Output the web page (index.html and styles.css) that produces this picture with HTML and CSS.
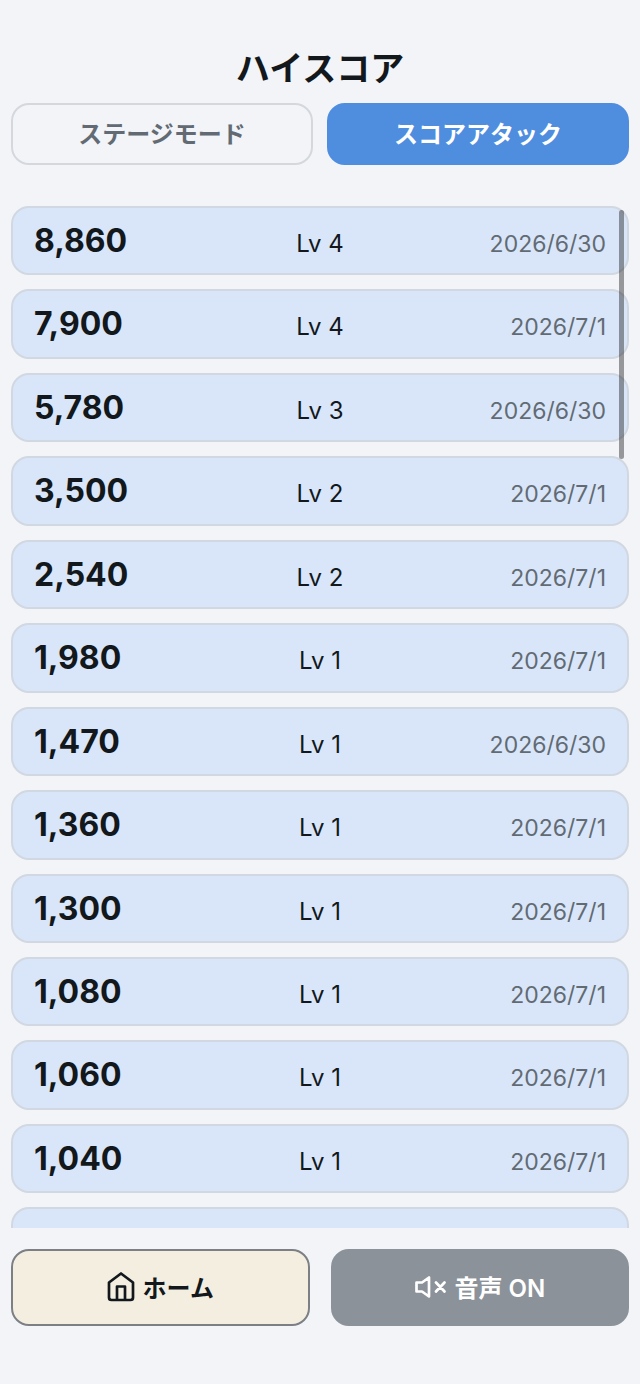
FILE: index.html
```html
<!DOCTYPE html>
<html lang="ja">
<head>
    <meta charset="UTF-8">
    <meta name="viewport" content="width=device-width, initial-scale=1.0">
    <title>ハイスコア</title>
    <link rel="stylesheet" href="styles.css">
</head>
<body>
    <h1>ハイスコア</h1>
    <div class="tabs">
        <button type="button" class="tab">ステージモード</button>
        <button type="button" class="tab active">スコアアタック</button>
    </div>

    <main class="scores">
        <ol class="score-list">
            <li><span class="score">8,860</span><span class="level">Lv 4</span><span class="date">2026/6/30</span></li>
            <li><span class="score">7,900</span><span class="level">Lv 4</span><span class="date">2026/7/1</span></li>
            <li><span class="score">5,780</span><span class="level">Lv 3</span><span class="date">2026/6/30</span></li>
            <li><span class="score">3,500</span><span class="level">Lv 2</span><span class="date">2026/7/1</span></li>
            <li><span class="score">2,540</span><span class="level">Lv 2</span><span class="date">2026/7/1</span></li>
            <li><span class="score">1,980</span><span class="level">Lv 1</span><span class="date">2026/7/1</span></li>
            <li><span class="score">1,470</span><span class="level">Lv 1</span><span class="date">2026/6/30</span></li>
            <li><span class="score">1,360</span><span class="level">Lv 1</span><span class="date">2026/7/1</span></li>
            <li><span class="score">1,300</span><span class="level">Lv 1</span><span class="date">2026/7/1</span></li>
            <li><span class="score">1,080</span><span class="level">Lv 1</span><span class="date">2026/7/1</span></li>
            <li><span class="score">1,060</span><span class="level">Lv 1</span><span class="date">2026/7/1</span></li>
            <li><span class="score">1,040</span><span class="level">Lv 1</span><span class="date">2026/7/1</span></li>
            <li></li>
        </ol>
        <div class="scroll-thumb"></div>
    </main>

    <footer class="actions">
        <button type="button" class="home">
            <svg width="28" height="30" viewBox="0 0 28 30" aria-hidden="true">
                <path d="M2 10.5 L14 1.5 L26 10.5 V25.5 Q26 28 23.5 28 H4.5 Q2 28 2 25.5 Z M10 28 V14.5 H18 V28"/>
            </svg>
            ホーム
        </button>
        <button type="button" class="sound">
            <svg width="32" height="24" viewBox="0 0 32 24" aria-hidden="true">
                <path d="M2.5 7.5 H8 L15 2.5 V21.5 L8 16.5 H2.5 Z M22 7.5 L30.5 16.5 M30.5 7.5 L22 16.5"/>
            </svg>
            音声 ON
        </button>
    </footer>
</body>
</html>
```
FILE: styles.css
```css
* {
    box-sizing: border-box;
}
body {
    margin: 0;
    padding: 48px 11px 58px;
    height: 100vh;
    display: flex;
    flex-direction: column;
    background: #f2f4f8;
    color: #12181c;
    font-family: Inter, "Noto Sans CJK JP", sans-serif;
    font-size: 24px;
}
h1 {
    margin: 0 0 13px;
    font-size: 34px;
    line-height: 42px;
    font-weight: 700;
    text-align: center;
}
button {
    font: inherit;
    color: inherit;
    border-radius: 18px;
    cursor: pointer;
}
.tabs {
    display: flex;
    gap: 14px;
    margin-bottom: 41px;
}
.tab {
    flex: 1;
    height: 62px;
    padding: 0 0 3px;
    border: 2px solid #d4d8dd;
    background: transparent;
    color: #626b73;
    font-weight: 600;
}
.tab.active {
    border-color: #4f8ddf;
    background: #4f8ddf;
    color: #fff;
}
.scores {
    position: relative;
    flex: 1;
    min-height: 0;
}
.score-list {
    height: 100%;
    margin: 0;
    padding: 0;
    list-style: none;
    display: flex;
    flex-direction: column;
    gap: 14px;
    overflow-y: auto;
    scrollbar-width: none;
}
.score-list li {
    flex-shrink: 0;
    min-height: 69px;
    display: grid;
    grid-template-columns: 1fr auto 1fr;
    align-items: baseline;
    padding: 14px 21px;
    border: 2px solid #d1d8e1;
    border-radius: 18px;
    background: #d9e6f9;
    line-height: 1.17;
}
.score {
    font-size: 32px;
    font-weight: 700;
}
.date {
    font-size: 23px;
    color: #626b73;
    text-align: right;
}
/* overlay scroll indicator */
.scroll-thumb {
    position: absolute;
    top: 4px;
    right: 5px;
    width: 5px;
    height: 249px;
    border-radius: 3px;
    background: rgba(0, 0, 0, 0.38);
    pointer-events: none;
}
.actions {
    display: flex;
    gap: 21px;
    margin-top: 21px;
}
.actions button {
    flex: 1;
    height: 77px;
    padding: 0 0 2px;
    display: flex;
    justify-content: center;
    align-items: center;
    gap: 8px;
    border: 2px solid #7c8085;
    font-weight: 600;
}
.actions .home {
    background: #f4eee1;
}
.actions .sound {
    border-color: #8b9299;
    background: #8b9299;
    color: #fff;
}
.actions svg {
    fill: none;
    stroke: currentColor;
    stroke-width: 2.7;
    stroke-linejoin: round;
    stroke-linecap: round;
}
```
